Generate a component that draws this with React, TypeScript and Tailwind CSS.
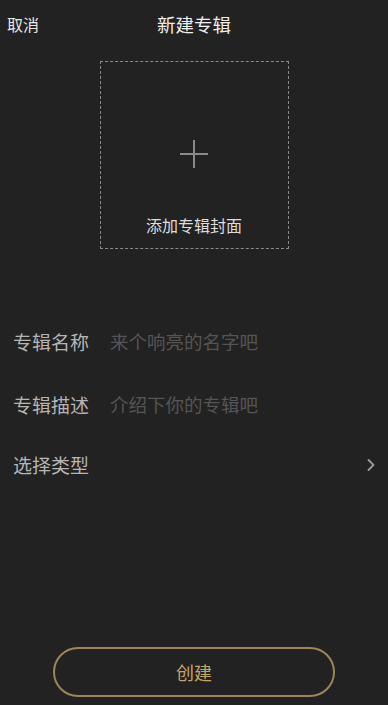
import { ChevronRight } from 'lucide-react';

const font = { fontFamily: '"Noto Sans CJK SC", "Noto Sans", sans-serif' };

export default function App() {
  return (
    <div className="w-[388px] h-[705px] bg-[#222222] flex flex-col overflow-hidden" style={font}>
      <div className="relative h-[48px] flex items-center justify-center">
        <span className="absolute left-[7px] top-[12px] text-[16px] leading-[24px] text-[#e6e6e6]">取消</span>
        <span className="text-[18.5px] leading-[24px] text-[#eeeeee]">新建专辑</span>
      </div>

      <div className="flex justify-center mt-[13px]">
        <div className="w-[189px] h-[188px] border-[1.5px] border-dashed border-[#8a8a8a] flex flex-col items-center">
          <div className="relative w-[28px] h-[28px] mt-[78px]">
            <div className="absolute left-0 right-0 top-[13px] h-[2px] bg-[#8a8a8a]" />
            <div className="absolute top-0 bottom-0 left-[13px] w-[2px] bg-[#8a8a8a]" />
          </div>
          <span className="mt-[45px] text-[16px] leading-[24px] text-[#dddddd]">添加专辑封面</span>
        </div>
      </div>

      <div className="flex flex-col mt-[78px] px-[13px]">
        <div className="flex items-center h-[30px]">
          <span className="w-[97px] text-[19px] text-[#b5b5b5]">专辑名称</span>
          <span className="text-[18.5px] text-[#555555]">来个响亮的名字吧</span>
        </div>
        <div className="flex items-center h-[30px] mt-[33px]">
          <span className="w-[97px] text-[19px] text-[#b5b5b5]">专辑描述</span>
          <span className="text-[18.5px] text-[#555555]">介绍下你的专辑吧</span>
        </div>
        <div className="flex items-center justify-between h-[30px] mt-[30px]">
          <span className="text-[19px] text-[#b5b5b5]">选择类型</span>
          <ChevronRight size={20} strokeWidth={2.2} className="text-[#9a9a9a] -mr-[6px]" />
        </div>
      </div>

      <div className="flex-1" />

      <div className="flex justify-center mb-[8px]">
        <button className="w-[282px] h-[50px] rounded-full border-2 border-[#9c8659] text-[18px] text-[#c4a66a]">
          创建
        </button>
      </div>
    </div>
  );
}
